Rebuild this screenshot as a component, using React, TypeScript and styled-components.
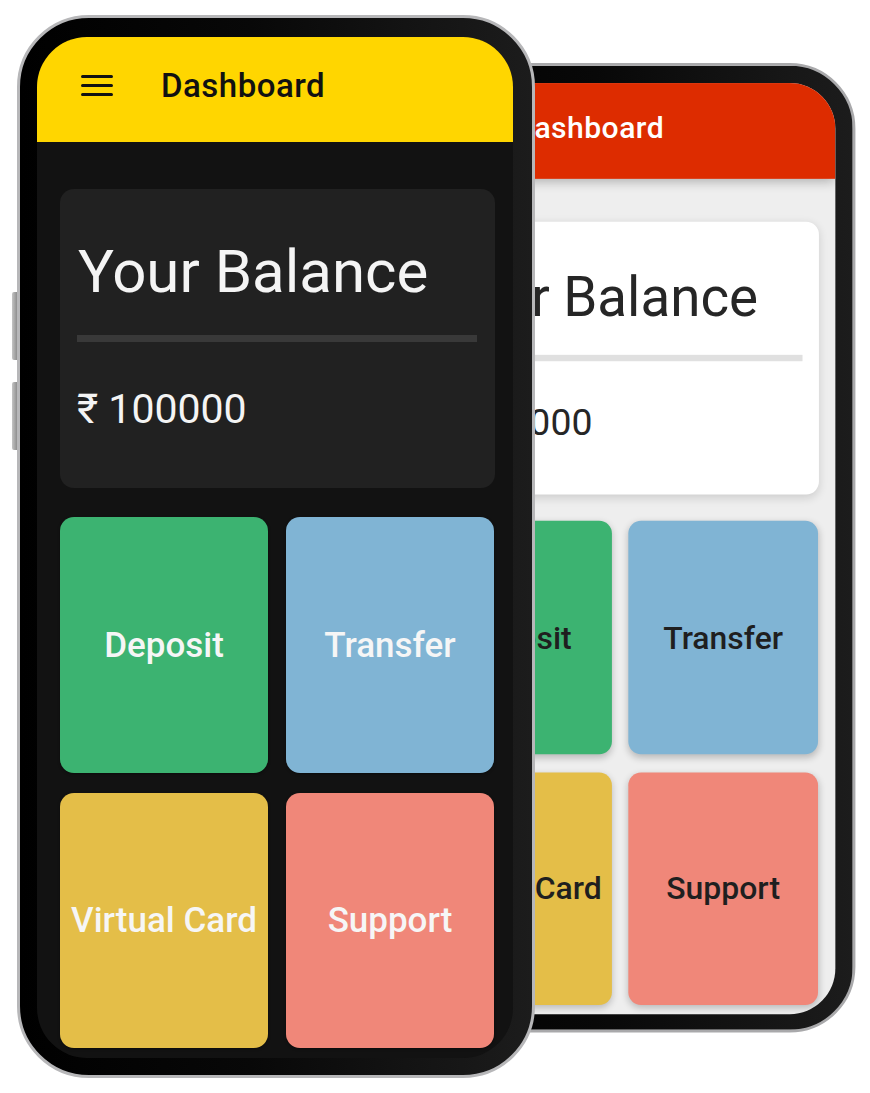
import React from 'react';
import styled, { createGlobalStyle, css } from 'styled-components';

type Variant = 'dark' | 'light';

const palette = {
  dark: {
    screen: '#121212',
    header: '#FFD600',
    headerText: '#111111',
    card: '#212121',
    cardText: '#f4f4f4',
    divider: '#393939',
    tileText: '#f6f6f6',
  },
  light: {
    screen: '#eeeeee',
    header: '#DD2C00',
    headerText: '#ffffff',
    card: '#ffffff',
    cardText: '#262626',
    divider: '#e0e0e0',
    tileText: '#1f1f1f',
  },
};

const tileColors = {
  deposit: '#3CB371',
  transfer: '#80B4D4',
  card: '#E4BE48',
  support: '#F08779',
};

const GlobalStyle = createGlobalStyle`
  html, body {
    margin: 0;
    padding: 0;
    background: #ffffff;
  }
  body {
    font-family: Roboto, "Liberation Sans", "DejaVu Sans", sans-serif;
  }
`;

const Stage = styled.div`
  position: relative;
  width: 870px;
  height: 1093px;
  overflow: hidden;
  background: #ffffff;
`;

// the two devices sit on a free canvas, the back one a bit smaller
const DeviceSlot = styled.div<{ $back?: boolean }>`
  position: absolute;
  ${(p) =>
    p.$back
      ? css`
          left: 383px;
          top: 63px;
          transform: scale(0.912);
          transform-origin: top left;
        `
      : css`
          left: 17px;
          top: 15px;
        `}
`;

const Frame = styled.div<{ $variant: Variant }>`
  position: relative;
  box-sizing: border-box;
  width: 518px;
  height: 1063px;
  border: 3px solid ${(p) => (p.$variant === 'dark' ? '#b7b7b9' : '#a9a9ab')};
  border-radius: 72px;
  padding: 19px 19px 17px 17px;
  background: linear-gradient(90deg, #000000 0%, #080808 45%, #1c1c1c 100%);
`;

const SideButton = styled.span<{ $top: number }>`
  position: absolute;
  left: -8px;
  top: ${(p) => p.$top}px;
  width: 5px;
  height: 68px;
  border-radius: 2px 0 0 2px;
  background: linear-gradient(90deg, #c4c4c4, #8f8f8f);
`;

const Screen = styled.div<{ $variant: Variant }>`
  display: flex;
  flex-direction: column;
  height: 100%;
  border-radius: 50px;
  overflow: hidden;
  background: ${(p) => palette[p.$variant].screen};
`;

const Header = styled.header<{ $variant: Variant }>`
  position: relative;
  z-index: 1;
  flex-shrink: 0;
  display: flex;
  align-items: center;
  gap: 48px;
  height: 105px;
  box-sizing: border-box;
  padding: 0 0 9px 44px;
  background: ${(p) => palette[p.$variant].header};
  color: ${(p) => palette[p.$variant].headerText};
  box-shadow: ${(p) =>
    p.$variant === 'light' ? '0 4px 12px rgba(0, 0, 0, 0.28)' : 'none'};
`;

const Title = styled.h1`
  margin: 0;
  font-size: 33px;
  font-weight: 500;
  line-height: 1;
  letter-spacing: 0.5px;
`;

const Content = styled.main`
  display: flex;
  flex-direction: column;
  gap: 29px;
  padding: 47px 18px 10px 23px;
`;

const BalanceCard = styled.section<{ $variant: Variant }>`
  box-sizing: border-box;
  height: 299px;
  padding: 48px 18px 0 17px;
  border-radius: 14px;
  background: ${(p) => palette[p.$variant].card};
  color: ${(p) => palette[p.$variant].cardText};
  box-shadow: ${(p) =>
    p.$variant === 'light' ? '0 3px 10px rgba(0, 0, 0, 0.14)' : 'none'};
`;

const BalanceLabel = styled.h2`
  margin: 0 0 0 1px;
  font-size: 60px;
  font-weight: 400;
  line-height: 70px;
`;

const Divider = styled.hr<{ $variant: Variant }>`
  margin: 28px 0 0;
  height: 7px;
  border: none;
  background: ${(p) => palette[p.$variant].divider};
`;

const Amount = styled.p`
  margin: 43px 0 0;
  font-size: 41px;
  line-height: 48px;
  font-weight: 400;
`;

const TileGrid = styled.div`
  display: grid;
  grid-template-columns: 208px 208px;
  grid-template-rows: 256px 255px;
  column-gap: 18px;
  row-gap: 20px;
`;

const Tile = styled.button<{ $color: string; $variant: Variant }>`
  display: flex;
  align-items: center;
  justify-content: center;
  padding: 0;
  border: none;
  border-radius: 14px;
  background: ${(p) => p.$color};
  color: ${(p) => palette[p.$variant].tileText};
  font-family: inherit;
  font-size: 35px;
  font-weight: 500;
  white-space: nowrap;
  box-shadow: ${(p) =>
    p.$variant === 'light'
      ? '0 3px 8px rgba(0, 0, 0, 0.22)'
      : '0 1px 3px rgba(0, 0, 0, 0.4)'};
  cursor: pointer;
`;

const MenuIcon = () => (
  <svg width="32" height="21" viewBox="0 0 32 21" aria-hidden="true">
    <rect x="0" y="0" width="32" height="3" rx="1.5" fill="currentColor" />
    <rect x="0" y="9" width="32" height="3" rx="1.5" fill="currentColor" />
    <rect x="0" y="18" width="32" height="3" rx="1.5" fill="currentColor" />
  </svg>
);

const tiles = [
  { label: 'Deposit', color: tileColors.deposit },
  { label: 'Transfer', color: tileColors.transfer },
  { label: 'Virtual Card', color: tileColors.card },
  { label: 'Support', color: tileColors.support },
];

const Phone = ({ variant }: { variant: Variant }) => (
  <Frame $variant={variant}>
    {variant === 'dark' && (
      <>
        <SideButton $top={274} />
        <SideButton $top={364} />
      </>
    )}
    <Screen $variant={variant}>
      <Header $variant={variant}>
        <MenuIcon />
        <Title>Dashboard</Title>
      </Header>
      <Content>
        <BalanceCard $variant={variant}>
          <BalanceLabel>Your Balance</BalanceLabel>
          <Divider $variant={variant} />
          <Amount>₹ 100000</Amount>
        </BalanceCard>
        <TileGrid>
          {tiles.map((t) => (
            <Tile key={t.label} $color={t.color} $variant={variant}>
              {t.label}
            </Tile>
          ))}
        </TileGrid>
      </Content>
    </Screen>
  </Frame>
);

const App = () => {
  return (
    <>
      <GlobalStyle />
      <Stage>
        <DeviceSlot $back>
          <Phone variant="light" />
        </DeviceSlot>
        <DeviceSlot>
          <Phone variant="dark" />
        </DeviceSlot>
      </Stage>
    </>
  );
};

export default App;
